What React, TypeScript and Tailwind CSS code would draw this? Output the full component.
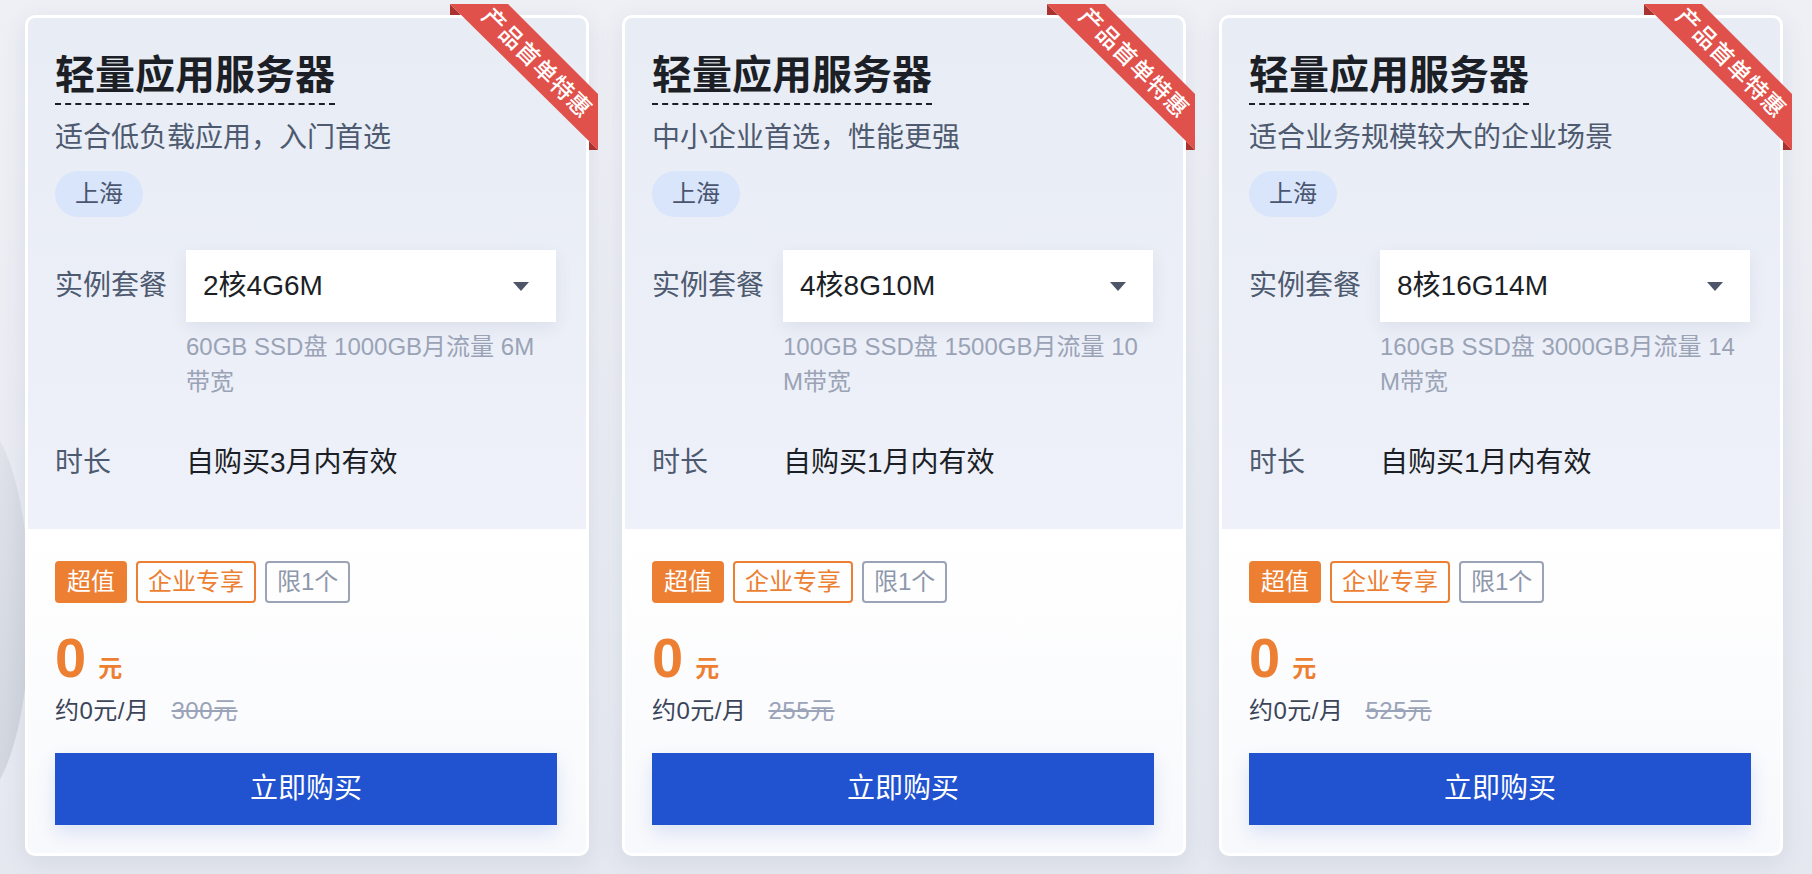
const FONT = { fontFamily: '"Liberation Sans", "Noto Sans CJK SC", sans-serif' };

const plans = [
  {
    desc: '适合低负载应用，入门首选',
    spec: '2核4G6M',
    detail: '60GB SSD盘 1000GB月流量 6M带宽',
    duration: '自购买3月内有效',
    original: '300元',
  },
  {
    desc: '中小企业首选，性能更强',
    spec: '4核8G10M',
    detail: '100GB SSD盘 1500GB月流量 10M带宽',
    duration: '自购买1月内有效',
    original: '255元',
  },
  {
    desc: '适合业务规模较大的企业场景',
    spec: '8核16G14M',
    detail: '160GB SSD盘 3000GB月流量 14M带宽',
    duration: '自购买1月内有效',
    original: '525元',
  },
];

function Ribbon() {
  return (
    <svg
      className="pointer-events-none absolute right-[-12px] top-[-14px] z-10"
      width="150"
      height="150"
      viewBox="0 0 150 150"
    >
      {/* folds behind the card edge */}
      <polygon points="2,0 13,11 2,11" fill="#a8332f" />
      <polygon points="150,146 141,137 141,146" fill="#a8332f" />
      <polygon points="2,0 60,0 150,90 150,146" fill="#e1514b" />
      <text
        x="89"
        y="59"
        transform="rotate(45 89 59)"
        textAnchor="middle"
        dominantBaseline="central"
        fill="#ffffff"
        fontSize="23"
        fontWeight="500"
        letterSpacing="1"
        style={FONT}
      >
        产品首单特惠
      </text>
    </svg>
  );
}

function PlanCard({ plan }: { plan: (typeof plans)[number] }) {
  return (
    <div className="relative w-[564px] shrink-0 rounded-[10px] border-[3px] border-white bg-white shadow-[0_6px_24px_rgba(60,80,130,0.10)]">
      <Ribbon />

      {/* config section */}
      <div className="rounded-t-[7px] bg-gradient-to-b from-[#e8ecf4] to-[#eef1f9] pb-[46px] pl-[27px] pr-[29px] pt-[33px]">
        <h3 className="inline-block border-b-2 border-dashed border-[#1c1f26] pb-[4px] text-[40px] font-bold leading-[48px] text-[#1c1f26]">
          轻量应用服务器
        </h3>
        <p className="mt-[13px] text-[28px] leading-[40px] text-[#4e5a70]">{plan.desc}</p>
        <div className="mt-[13px]">
          <span className="inline-flex h-[46px] items-center rounded-full bg-[#d9e5fb] px-[20px] text-[24px] text-[#4a5670]">
            上海
          </span>
        </div>

        <div className="mt-[33px] flex">
          <div className="flex h-[72px] w-[131px] shrink-0 items-center text-[28px] text-[#4e5a70]">
            实例套餐
          </div>
          <div className="w-[370px]">
            <div className="flex h-[72px] items-center justify-between bg-white pl-[17px] pr-[27px] shadow-[0_6px_16px_rgba(50,70,120,0.08)]">
              <span className="text-[28px] text-[#1c1f26]">{plan.spec}</span>
              <span className="h-0 w-0 border-x-[8px] border-t-[9px] border-x-transparent border-t-[#4e5569]" />
            </div>
            <p className="mt-[7px] break-all text-[24px] leading-[35px] text-[#9aa3b6]">{plan.detail}</p>
          </div>
        </div>

        <div className="mt-[44px] flex items-center text-[28px] leading-[40px]">
          <span className="w-[131px] shrink-0 text-[#4e5a70]">时长</span>
          <span className="text-[#1c1f26]">{plan.duration}</span>
        </div>
      </div>

      {/* price section */}
      <div className="rounded-b-[7px] bg-gradient-to-b from-white to-[#f8f9fc] pb-[28px] pl-[27px] pr-[29px] pt-[32px]">
        <div className="flex gap-[9px] text-[24px]">
          <span className="flex h-[42px] items-center rounded-[4px] border-2 border-[#ed7f32] bg-[#ed7f32] px-[10px] text-white">
            超值
          </span>
          <span className="flex h-[42px] items-center rounded-[4px] border-2 border-[#ed7f32] px-[10px] text-[#ed7f32]">
            企业专享
          </span>
          <span className="flex h-[42px] items-center rounded-[4px] border-2 border-[#9ba4b6] px-[10px] text-[#8f98ab]">
            限1个
          </span>
        </div>

        <div className="mt-[25px] flex items-baseline gap-[12px] text-[#ed7f32]">
          <span className="text-[56px] font-bold leading-[60px]">0</span>
          <span className="text-[24px] font-bold">元</span>
        </div>
        <div className="mt-[7px] flex items-center gap-[22px] text-[24px] leading-[32px]">
          <span className="tracking-[0.5px] text-[#3b4559]">约0元/月</span>
          <span className="tracking-[0.5px] text-[#9aa3b8] line-through">{plan.original}</span>
        </div>

        <button className="mt-[26px] flex h-[72px] w-full items-center justify-center bg-[#2152d0] text-[28px] text-white shadow-[0_8px_18px_rgba(33,82,208,0.14)]">
          立即购买
        </button>
      </div>
    </div>
  );
}

export default function App() {
  return (
    <div
      className="relative min-h-screen w-full overflow-hidden bg-gradient-to-b from-[#eef0f5] to-[#e5e8ef]"
      style={FONT}
    >
      {/* background art on the left edge */}
      <div className="absolute left-[-80px] top-[420px] h-[380px] w-[110px] rounded-[50%] bg-gradient-to-br from-[#eef0f4] via-[#dcdfe6] to-[#cdd2da]" />

      <div className="relative flex gap-[33px] pl-[25px] pt-[15px]">
        {plans.map((plan) => (
          <PlanCard key={plan.spec} plan={plan} />
        ))}
      </div>
    </div>
  );
}
